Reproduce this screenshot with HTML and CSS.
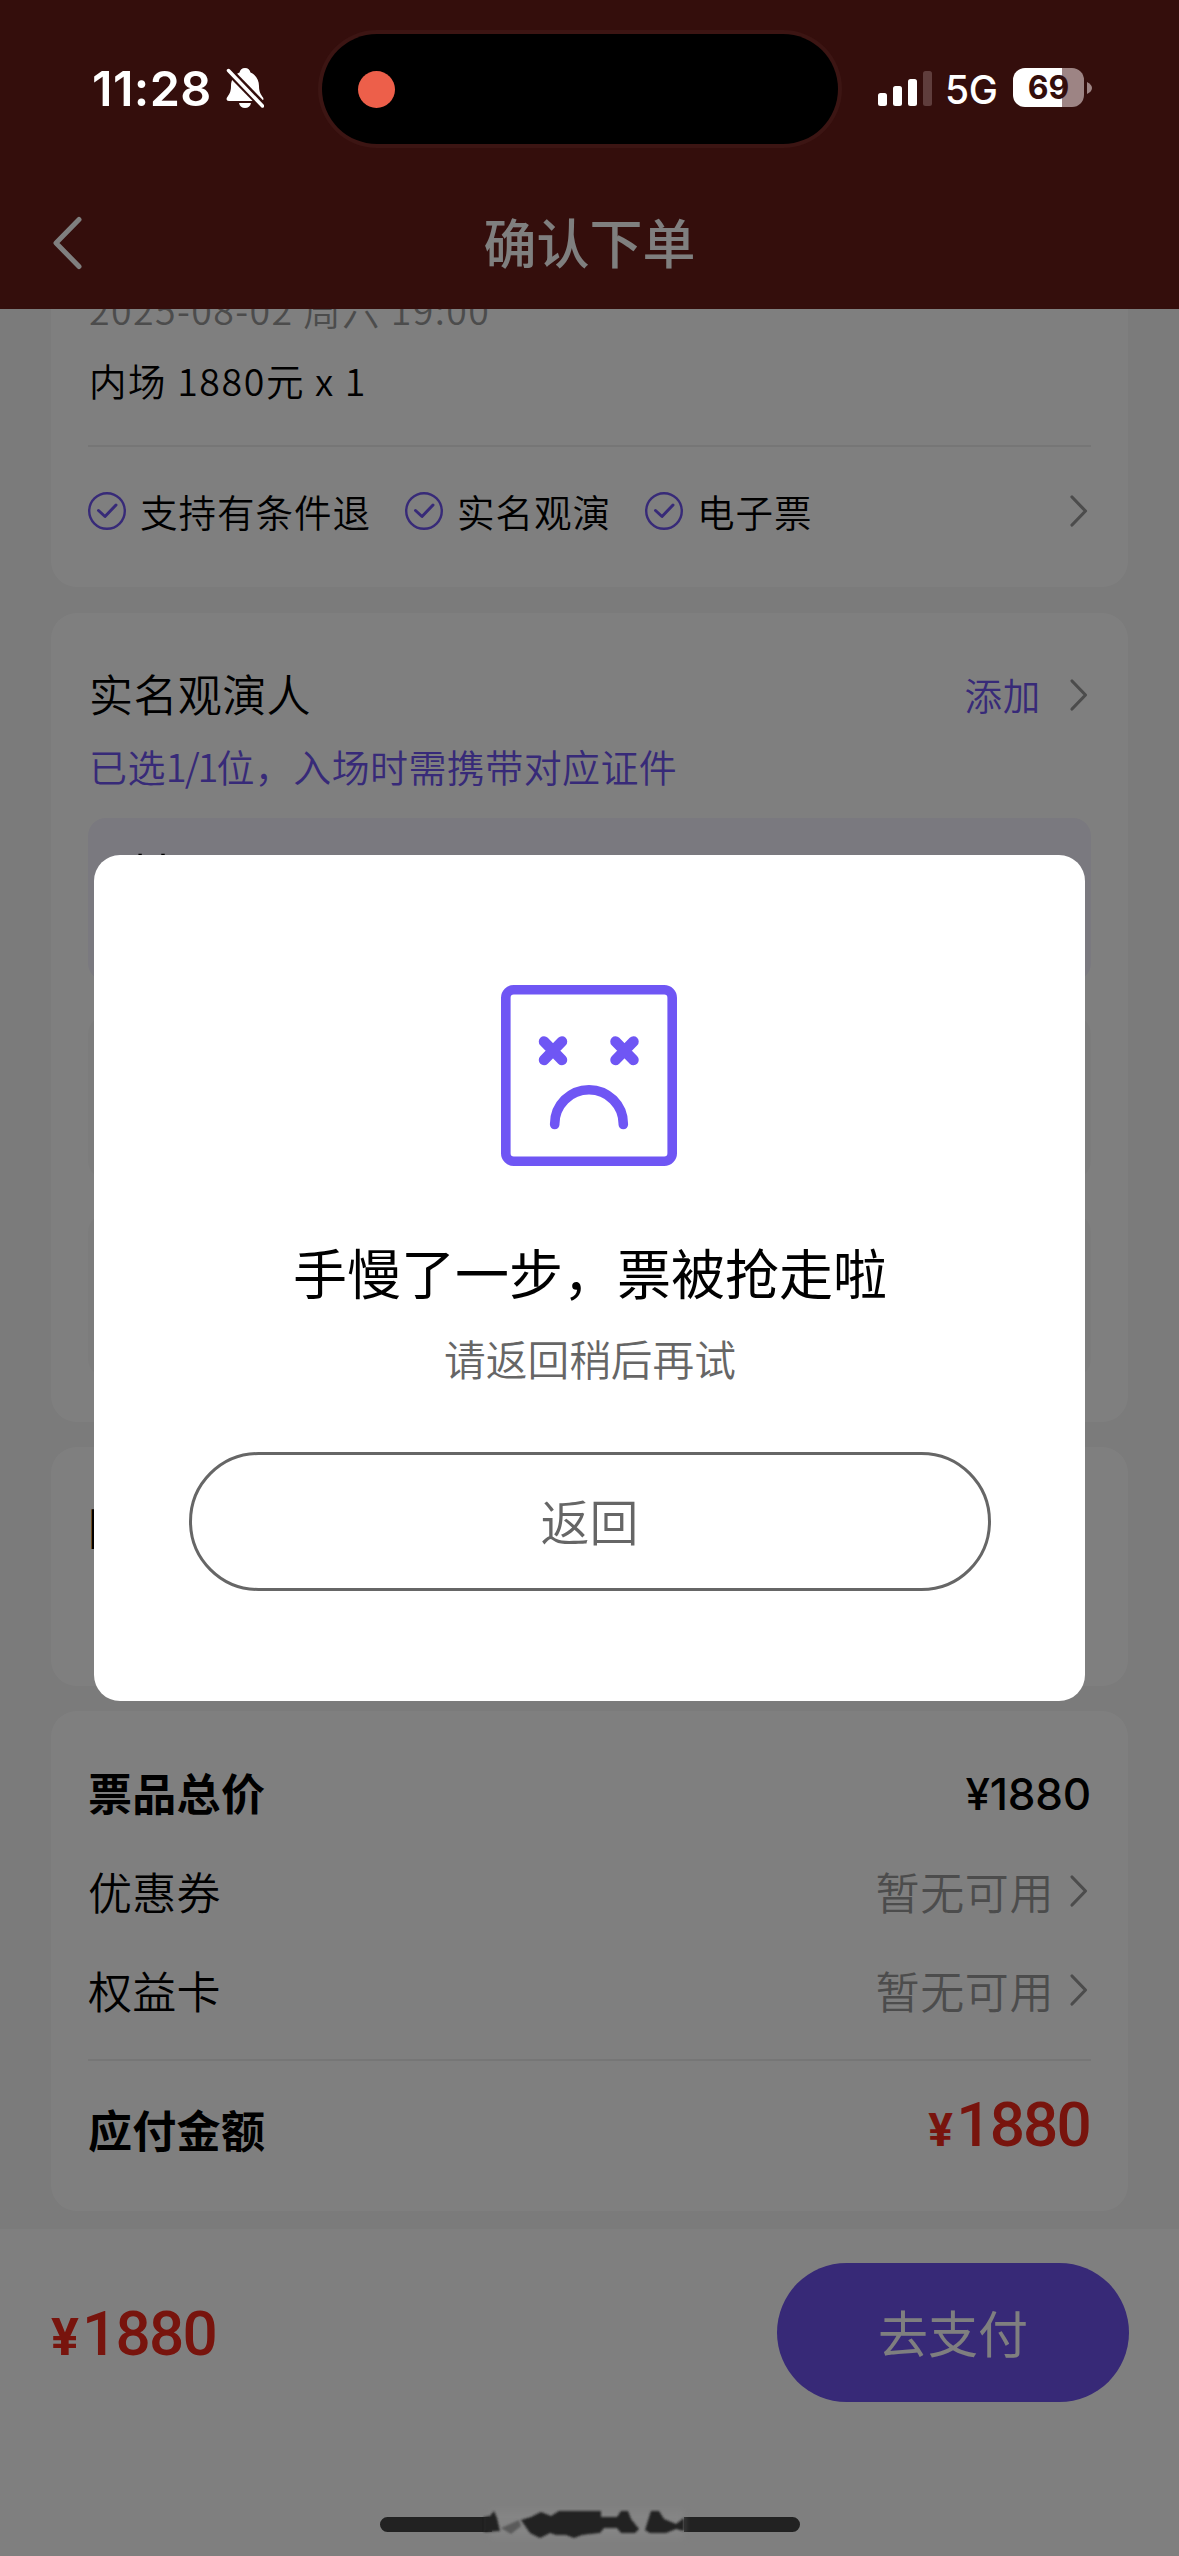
FILE: index.html
```html
<!DOCTYPE html>
<html lang="zh-CN">
<head>
<meta charset="utf-8">
<title>确认下单</title>
<link rel="stylesheet" href="styles.css">
</head>
<body>
<div class="phone">
  <header class="nav">
    <svg class="back" viewBox="0 0 32 56"><path d="M28 4.500 5 28l23 23.500"/></svg>
    <h1>确认下单</h1>
  </header>

  <main class="content">
    <section class="card card-event">
      <p class="date">2025-08-02 周六 19:00</p>
      <p class="seat">内场 1880元 x 1</p>
      <hr>
      <div class="services">
        <span class="service"><svg viewBox="0 0 38 38"><circle cx="19" cy="19" r="17.800"/><path d="M10.500 18.500l6.500 6 11-11.500"/></svg>支持有条件退</span>
        <span class="service"><svg viewBox="0 0 38 38"><circle cx="19" cy="19" r="17.800"/><path d="M10.500 18.500l6.500 6 11-11.500"/></svg>实名观演</span>
        <span class="service"><svg viewBox="0 0 38 38"><circle cx="19" cy="19" r="17.800"/><path d="M10.500 18.500l6.500 6 11-11.500"/></svg>电子票</span>
        <svg class="chevron" viewBox="0 0 20 34"><path d="M3 3l13.500 14L3 31"/></svg>
      </div>
    </section>

    <section class="card card-people">
      <div class="people-head">
        <h2>实名观演人</h2>
        <span class="add">添加</span>
        <svg class="chevron" viewBox="0 0 20 34"><path d="M3 3l13.500 14L3 31"/></svg>
      </div>
      <p class="hint">已选<span class="count">1/1</span>位，入场时需携带对应证件</p>
      <ul class="people">
        <li class="person selected">林</li>
        <li class="person"></li>
        <li class="person"></li>
      </ul>
    </section>

    <section class="card card-extra"><h2>国</h2></section>

    <section class="card card-price">
      <div class="row strong"><span>票品总价</span><span class="amount">¥1880</span></div>
      <div class="row"><span>优惠券</span><span class="none">暂无可用</span><svg class="chevron" viewBox="0 0 20 34"><path d="M3 3l13.500 14L3 31"/></svg></div>
      <div class="row"><span>权益卡</span><span class="none">暂无可用</span><svg class="chevron" viewBox="0 0 20 34"><path d="M3 3l13.500 14L3 31"/></svg></div>
      <hr>
      <div class="row strong total"><span>应付金额</span><span class="price"><i>¥</i>1880</span></div>
    </section>
  </main>

  <footer class="paybar">
    <span class="price"><i>¥</i>1880</span>
    <button class="pay">去支付</button>
  </footer>

  <div class="mask"></div>

  <div class="dialog">
    <svg class="sad" viewBox="0 0 176 181">
      <rect x="4.800" y="4.800" width="166.400" height="171.400" rx="8"/>
      <g class="eyes"><path d="M43 56.500l18 18.500M61 56.500 43 75"/><path d="M114.500 56.500l18 18.500M132.500 56.500l-18 18.500"/></g>
      <path d="M53.700 139.500v-.5a34.300 34.300 0 0 1 68.600 0v.5"/>
    </svg>
    <h3>手慢了一步，票被抢走啦</h3>
    <p>请返回稍后再试</p>
    <button class="return">返回</button>
  </div>

  <div class="status">
    <span class="time">11:28</span>
    <svg class="bell" viewBox="0 0 38 42">
      <path d="M19 1c3 0 5 1.800 5.500 4.500C30 8 33 13 33 19c0 6.500 2 8.500 4 11.500 1 1.700.3 3.500-2 3.500H3c-2.300 0-3-1.800-2-3.500C3 27.500 5 25.500 5 19 5 13 8 8 13.500 5.500 14 2.800 16 1 19 1z"/>
      <path d="M13 36h12c-.6 3.300-3 5-6 5s-5.400-1.700-6-5z"/>
      <path class="cut" d="M2 3l35 36"/><path class="slash" d="M2.500 3.500l34 35.500"/>
    </svg>
    <div class="island"><span class="rec"></span></div>
    <svg class="signal" viewBox="0 0 54 35"><rect y="22" width="9" height="13" rx="2.500"/><rect x="15" y="15" width="9" height="20" rx="2.500"/><rect x="30" y="8" width="9" height="27" rx="2.500"/><rect class="off" x="45" width="9" height="35" rx="2.500"/></svg>
    <span class="net">5G</span>
    <div class="battery">69</div>
    <svg class="nub" viewBox="0 0 5 12"><path d="M0 0c3 1.500 5 3.500 5 6s-2 4.500-5 6z"/></svg>
  </div>

  <svg class="home" viewBox="370 2500 440 46">
    <defs><filter id="soft" x="-10%" y="-50%" width="120%" height="200%"><feGaussianBlur stdDeviation="1"/></filter>
    <filter id="haze" x="-10%" y="-50%" width="120%" height="200%"><feGaussianBlur stdDeviation="3"/></filter></defs>
    <path class="bar" d="M387.500 2517H492v15H387.500a7.500 7.500 0 0 1 0-15zM684 2517h108.500a7.500 7.500 0 0 1 0 15H684z"/>
    <path class="fog" filter="url(#haze)" d="M490 2510h194v28H490z"/>
    <path class="ink" filter="url(#soft)" d="M484 2517l6-1 4-5 3 7 3 13-16 1zM521 2520l10-3 10-5 10 4 8-5h42v6h16l4-6h7l3 8 8 10-4 4h-14l-4-5h-13l-4 5-10 1-8 1-8 3-8-3h-10l-6-2-10 5-10-5zM645 2530l6-19h8l5 8 12 5 8-6v13l-8-2-10 4h-16z"/>
    <path class="smear" filter="url(#soft)" d="M501 2528l18-8 2 6-10 8z"/>
  </svg>
</div>
</body>
</html>
```
FILE: styles.css
```css
* { box-sizing: border-box; margin: 0; padding: 0; }

body {
  width: 1179px;
  height: 2556px;
  overflow: hidden;
  font-family: "Noto Sans CJK SC", "Noto Sans", sans-serif;
  color: #000;
}

.phone {
  position: relative;
  width: 1179px;
  height: 2556px;
  display: flex;
  flex-direction: column;
  background: #f6f6f6;
  overflow: hidden;
}

h1, h2, h3 { font-weight: 400; }
hr { border: 0; height: 2px; background: #ececec; }
button { font-family: inherit; }
svg { display: block; flex: none; fill: none; }

/* navigation */
.nav {
  flex: none;
  height: 309px;
  padding: 178px 53px 0 51px;
  display: grid;
  grid-template-columns: 32px 1fr 30px;
  align-items: start;
  background: #681c18;
}
.back { width: 32px; height: 56px; margin-top: 37px; stroke: #fff; stroke-width: 5; stroke-linecap: round; stroke-linejoin: round; }
.nav h1 { text-align: center; color: #fff; font-size: 53px; font-weight: 500; line-height: 127px; }

/* cards */
.content {
  flex: none;
  height: 1920px;
  padding: 0 51px;
  display: flex;
  flex-direction: column;
  gap: 25px;
  overflow: hidden;
  font-weight: 350;
}
.content h2 { font-weight: 350; }
.card { flex: none; padding: 0 37px; border-radius: 26px; background: #fff; }
.chevron { width: 20px; height: 34px; stroke: #999; stroke-width: 3.2; stroke-linecap: round; stroke-linejoin: round; }

.card-event { height: 318px; margin-top: -40px; margin-bottom: 1px; padding-top: 15px; }
.date, .seat { padding-left: 1px; font-size: 37.5px; line-height: 50px; white-space: pre; }
.date { color: #999; letter-spacing: 1.4px; }
.seat { margin-top: 21px; letter-spacing: 1.6px; }
.card-event hr { margin-top: 40px; }
.services { height: 128px; display: flex; align-items: center; gap: 34px; }
.service { display: flex; align-items: center; gap: 14px; font-size: 37.5px; letter-spacing: 1px; line-height: 50px; }
.service svg { width: 38px; height: 38px; stroke: #6f54f0; stroke-width: 2.400; stroke-linecap: round; stroke-linejoin: round; }
.service path { stroke-width: 3; }
.services .chevron { margin-left: auto; margin-right: 2px; }

.card-people { height: 809px; padding-top: 50px; }
.people-head { height: 60px; display: flex; align-items: center; }
.people-head h2 { flex: 1; padding-left: 1px; font-size: 44px; letter-spacing: .4px; line-height: 60px; }
.add { margin-top: 2px; color: #6f54f0; font-size: 37.5px; letter-spacing: .8px; line-height: 50px; }
.people-head .chevron { margin: 3px 2px 0 28px; }
.hint { margin-top: 18px; padding-left: 1px; color: #6f54f0; font-size: 38px; letter-spacing: .4px; line-height: 50px; white-space: nowrap; }
.count { letter-spacing: -2px; }
.people { margin-top: 27px; display: flex; flex-direction: column; gap: 35px; list-style: none; }
.person { height: 163px; padding: 25px 38px; border-radius: 18px; background: #f9f9f9; font-size: 52px; line-height: 66px; }
.person.selected { background: #f4f2fe; }

.card-extra { height: 239px; padding-top: 49px; }
.card-extra h2 { font-size: 44px; font-weight: 500; line-height: 60px; }

.card-price { height: 500px; padding-top: 31px; }
.row { height: 99px; display: flex; align-items: center; font-size: 44px; letter-spacing: .3px; }
.row > span:first-child { flex: 1; }
.strong { font-weight: 600; }
.amount { margin: 4px 0 0 0; font-family: Inter, sans-serif; font-weight: 550; letter-spacing: -.2px; }
.none { color: #999; letter-spacing: .6px; }
.row .chevron { margin: 1px 2px 0 15px; }
.card-price hr { margin-top: 20px; }
.card-price .total { height: 135px; }

.price { font-family: Roboto, sans-serif; font-weight: 500; font-size: 62px; letter-spacing: -1.8px; line-height: 80px; color: #f0281a; }
.price i { margin-right: 5px; font-style: normal; font-weight: 700; font-size: 46px; }
.total .price { margin: -3px 1px 0 0; }

/* bottom pay bar */
.paybar { flex: none; height: 327px; padding: 34px 50px 0 51px; display: flex; align-items: flex-start; justify-content: space-between; background: #fff; }
.paybar .price { margin-top: 31px; }
.paybar .price i { font-size: 52px; }
.pay { width: 352px; height: 139px; padding-bottom: 4px; border: 0; border-radius: 70px; background: #6e52ee; color: #fff; font-size: 50px; }

/* overlay */
.mask { position: absolute; inset: 0; background: rgba(0, 0, 0, .5); }

.dialog {
  position: absolute;
  left: 94px;
  top: 855px;
  width: 991px;
  height: 846px;
  padding-top: 130px;
  display: flex;
  flex-direction: column;
  align-items: center;
  border-radius: 26px;
  background: #fff;
}
.sad { width: 176px; height: 181px; margin-right: 1px; stroke: #6f56f4; stroke-width: 9.600; stroke-linecap: round; }
.sad .eyes { stroke-width: 10.500; }
.dialog h3 { margin-top: 66px; padding-left: 1px; font-size: 54px; line-height: 80px; }
.dialog p { margin-top: 16px; padding-left: 1px; color: #666; font-size: 41.700px; font-weight: 350; line-height: 60px; }
.return { width: 802px; height: 139px; margin-top: 64px; padding-bottom: 4px; border: 3px solid #666; border-radius: 70px; background: #fff; color: #666; font-size: 49px; font-weight: 350; }

/* system status bar */
.status {
  position: absolute;
  inset: 0 0 auto 0;
  height: 178px;
  padding-left: 92px;
  display: flex;
  align-items: center;
  font-family: Inter, sans-serif;
  color: #fff;
}
.time { width: 134px; margin-top: -2px; font-size: 48.500px; font-weight: 600; letter-spacing: .4px; }
.bell { width: 38px; height: 42px; margin-top: -2px; fill: #fff; }
.bell .cut { stroke: #340e0c; stroke-width: 8; }
.bell .slash { stroke: #fff; stroke-width: 3.500; stroke-linecap: round; }
.island { width: 516px; height: 110px; margin-left: 58px; padding-left: 36px; display: flex; align-items: center; border-radius: 55px; background: #000; box-shadow: 0 0 0 4px #3c1513; }
.rec { width: 37px; height: 37px; border-radius: 50%; background: #ed5f4a; }
.signal { width: 54px; height: 35px; margin: -2px 0 0 40px; fill: #fff; }
.signal .off { fill: #5f3d3c; }
.net { width: 68px; margin-left: 13px; font-size: 39px; font-weight: 500; letter-spacing: -.4px; }
.battery { width: 71px; height: 39px; margin-top: -3px; border-radius: 12px; background: linear-gradient(90deg, #fff 49px, #9d8484 49px); color: #340e0c; font-size: 32px; font-weight: 700; line-height: 39px; text-align: center; }
.nub { width: 5px; height: 12px; margin: -3px 0 0 3px; fill: #9d8484; }

.home { position: absolute; left: 370px; top: 2500px; width: 440px; height: 46px; }
.home .bar, .home .ink { fill: #222; }
.home .fog { fill: #8a8a8a; opacity: .5; }
.home .smear { fill: #5a5a5a; }
```
